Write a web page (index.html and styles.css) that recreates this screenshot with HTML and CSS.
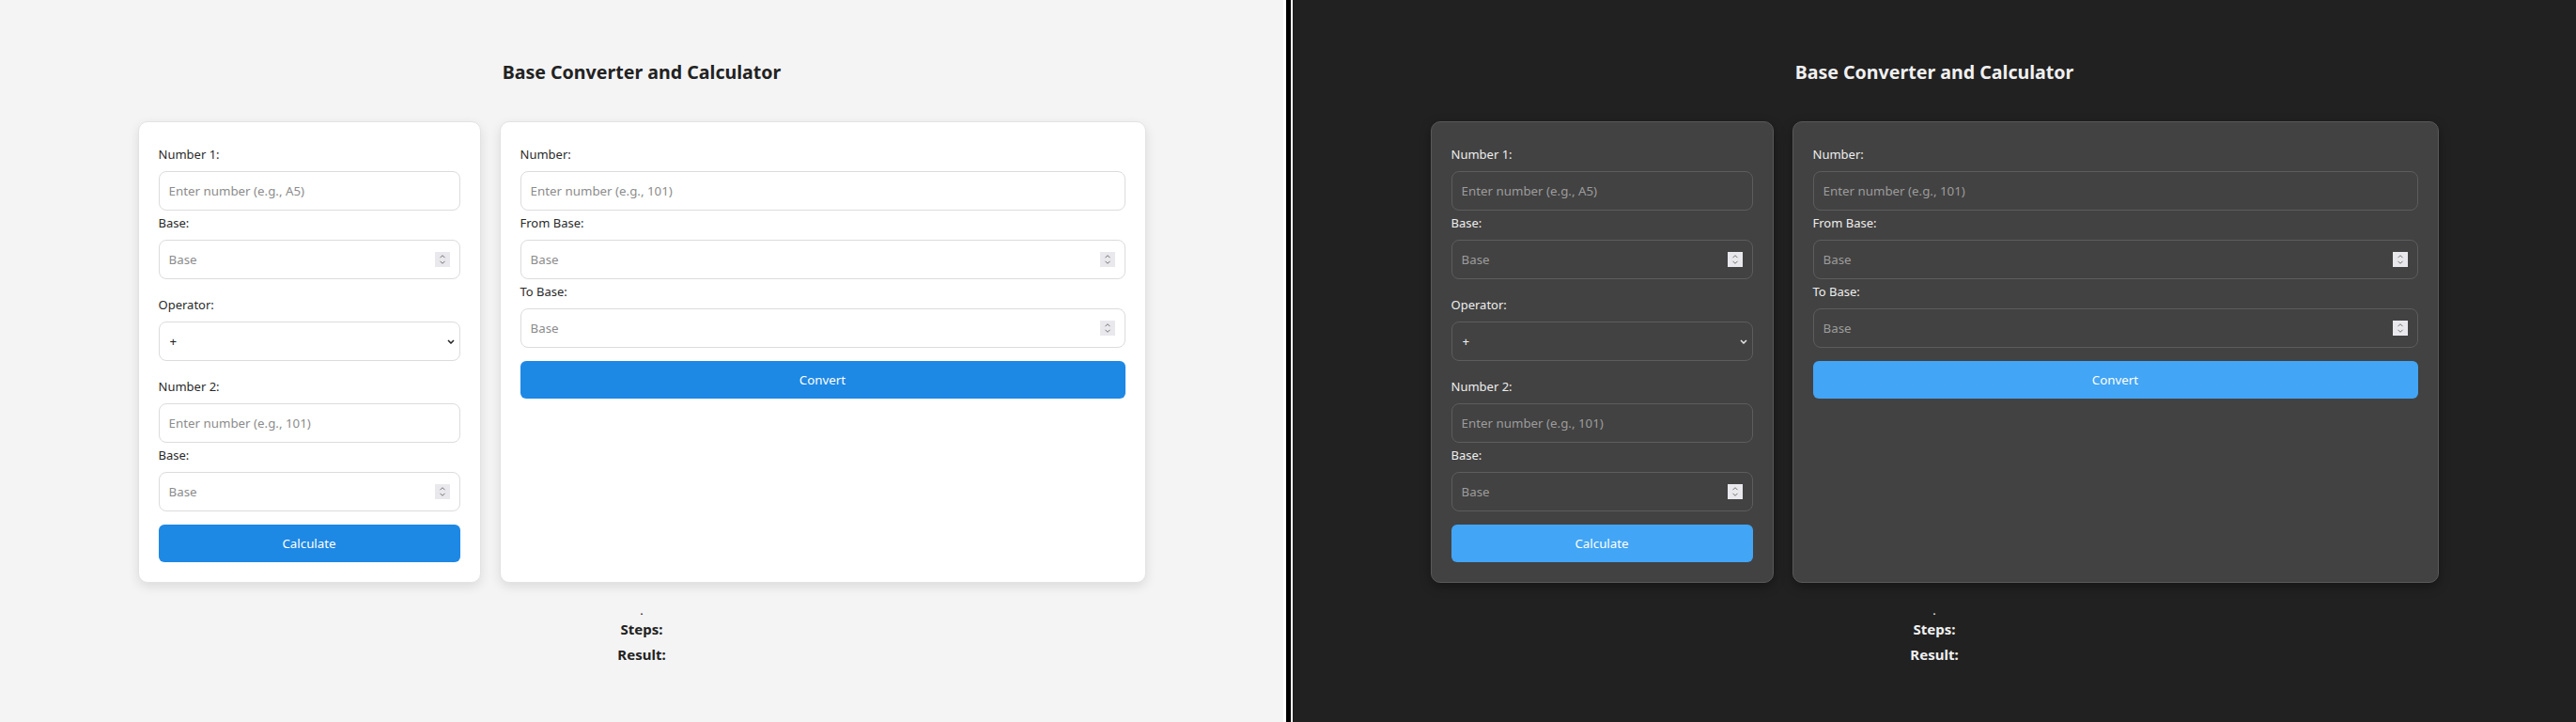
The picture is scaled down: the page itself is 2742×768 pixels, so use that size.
FILE: index.html
```html
<!DOCTYPE html>
<html lang="en">
<head>
<meta charset="utf-8">
<title>Base Converter and Calculator</title>
<link rel="stylesheet" href="styles.css">
</head>
<body>
<div class="split">
  <div class="view light">
    <h1 class="title">Base Converter and Calculator</h1>
    <div class="cards">
      <section class="card calc">
        <div class="group">
          <label>Number 1:</label>
          <div class="field"><input type="text" placeholder="Enter number (e.g., A5)"></div>
          <label>Base:</label>
          <div class="field"><input type="text" placeholder="Base"><svg class="spin" width="16" height="16" viewBox="0 0 16 16"><rect width="16" height="16"/><path d="M5.5 6.2 L8 3.7 L10.5 6.2 M5.5 9.8 L8 12.3 L10.5 9.8"/></svg></div>
        </div>
        <div class="group">
          <label>Operator:</label>
          <div class="field sel"><select><option>+</option></select><svg class="chev" width="8" height="5" viewBox="0 0 8 5"><path d="M1 1 L4 4 L7 1"/></svg></div>
        </div>
        <div class="group last">
          <label>Number 2:</label>
          <div class="field"><input type="text" placeholder="Enter number (e.g., 101)"></div>
          <label>Base:</label>
          <div class="field"><input type="text" placeholder="Base"><svg class="spin" width="16" height="16" viewBox="0 0 16 16"><rect width="16" height="16"/><path d="M5.5 6.2 L8 3.7 L10.5 6.2 M5.5 9.8 L8 12.3 L10.5 9.8"/></svg></div>
        </div>
        <button class="btn">Calculate</button>
      </section>
      <section class="card conv">
        <div class="group last">
          <label>Number:</label>
          <div class="field"><input type="text" placeholder="Enter number (e.g., 101)"></div>
          <label>From Base:</label>
          <div class="field"><input type="text" placeholder="Base"><svg class="spin" width="16" height="16" viewBox="0 0 16 16"><rect width="16" height="16"/><path d="M5.5 6.2 L8 3.7 L10.5 6.2 M5.5 9.8 L8 12.3 L10.5 9.8"/></svg></div>
          <label>To Base:</label>
          <div class="field"><input type="text" placeholder="Base"><svg class="spin" width="16" height="16" viewBox="0 0 16 16"><rect width="16" height="16"/><path d="M5.5 6.2 L8 3.7 L10.5 6.2 M5.5 9.8 L8 12.3 L10.5 9.8"/></svg></div>
        </div>
        <button class="btn">Convert</button>
      </section>
    </div>
    <div class="output">
      <div class="dot">.</div>
      <div class="line">Steps:</div>
      <div class="line">Result:</div>
    </div>
  </div>
  <div class="divider"></div>
  <div class="view dark">
    <h1 class="title">Base Converter and Calculator</h1>
    <div class="cards">
      <section class="card calc">
        <div class="group">
          <label>Number 1:</label>
          <div class="field"><input type="text" placeholder="Enter number (e.g., A5)"></div>
          <label>Base:</label>
          <div class="field"><input type="text" placeholder="Base"><svg class="spin" width="16" height="16" viewBox="0 0 16 16"><rect width="16" height="16"/><path d="M5.5 6.2 L8 3.7 L10.5 6.2 M5.5 9.8 L8 12.3 L10.5 9.8"/></svg></div>
        </div>
        <div class="group">
          <label>Operator:</label>
          <div class="field sel"><select><option>+</option></select><svg class="chev" width="8" height="5" viewBox="0 0 8 5"><path d="M1 1 L4 4 L7 1"/></svg></div>
        </div>
        <div class="group last">
          <label>Number 2:</label>
          <div class="field"><input type="text" placeholder="Enter number (e.g., 101)"></div>
          <label>Base:</label>
          <div class="field"><input type="text" placeholder="Base"><svg class="spin" width="16" height="16" viewBox="0 0 16 16"><rect width="16" height="16"/><path d="M5.5 6.2 L8 3.7 L10.5 6.2 M5.5 9.8 L8 12.3 L10.5 9.8"/></svg></div>
        </div>
        <button class="btn">Calculate</button>
      </section>
      <section class="card conv">
        <div class="group last">
          <label>Number:</label>
          <div class="field"><input type="text" placeholder="Enter number (e.g., 101)"></div>
          <label>From Base:</label>
          <div class="field"><input type="text" placeholder="Base"><svg class="spin" width="16" height="16" viewBox="0 0 16 16"><rect width="16" height="16"/><path d="M5.5 6.2 L8 3.7 L10.5 6.2 M5.5 9.8 L8 12.3 L10.5 9.8"/></svg></div>
          <label>To Base:</label>
          <div class="field"><input type="text" placeholder="Base"><svg class="spin" width="16" height="16" viewBox="0 0 16 16"><rect width="16" height="16"/><path d="M5.5 6.2 L8 3.7 L10.5 6.2 M5.5 9.8 L8 12.3 L10.5 9.8"/></svg></div>
        </div>
        <button class="btn">Convert</button>
      </section>
    </div>
    <div class="output">
      <div class="dot">.</div>
      <div class="line">Steps:</div>
      <div class="line">Result:</div>
    </div>
  </div>
</div>
</body>
</html>
```

FILE: styles.css
```css
* { box-sizing: border-box; }

body {
  margin: 0;
  font-family: "Noto Sans", "Open Sans", sans-serif;
}

.split {
  display: flex;
  width: 2742px;
  height: 768px;
}

.view {
  flex: none;
  width: 1366px;
  height: 768px;
  padding-top: 62px;
}

.light { background: #f4f4f4; color: #222; }
.dark { background: #212121; color: #f0f0f0; }

.divider {
  flex: none;
  width: 10px;
  background: linear-gradient(to right, #fff 0 3px, #000 3px 8px, #fff 8px 10px);
}

.title {
  margin: 0 0 38px;
  text-align: center;
  font-size: 19.6px;
  line-height: 29px;
  font-weight: 700;
}

.cards {
  display: flex;
  justify-content: center;
  gap: 20px;
}

.card {
  display: flex;
  flex-direction: column;
  padding: 21px;
  border-radius: 10px;
  border: 1px solid #e3e3e3;
  background: #fff;
  box-shadow: 0 4px 12px rgba(0, 0, 0, 0.1);
}

.dark .card {
  background: #424242;
  border-color: #595959;
  box-shadow: 0 4px 12px rgba(0, 0, 0, 0.35);
}

.calc { width: 365px; }
.conv { width: 688px; }

.group {
  display: flex;
  flex-direction: column;
  margin-bottom: 14px;
}
.group.last { margin-bottom: 0; }

label {
  display: block;
  font-size: 13px;
  line-height: 18px;
  margin: 4px 0 9px;
  color: #2a2a2a;
}
.dark label { color: #eeeeee; }

.field {
  display: flex;
  align-items: center;
  height: 42px;
  padding: 0 10px;
  border: 1px solid #dcdcdc;
  border-radius: 8px;
  background: #fff;
}
.dark .field {
  background: #424242;
  border-color: #5d5d5d;
}

.field input,
.field select {
  flex: 1;
  min-width: 0;
  padding: 0;
  margin: 0;
  border: 0;
  outline: 0;
  background: transparent;
  font-family: "Noto Sans", "Open Sans", sans-serif;
  font-size: 13.333px;
  color: #222;
  appearance: none;
  -webkit-appearance: none;
}
.dark .field input,
.dark .field select { color: #f0f0f0; }

.field input::placeholder { color: #8c8c8c; }
.dark .field input::placeholder { color: #9c9c9c; }

.field.sel { padding-right: 5px; }
.field select { padding-left: 1px; }

.spin { flex: none; }
.spin rect { fill: #e9e9ed; }
.spin path { fill: none; stroke: #737373; stroke-width: 1; }

.chev { flex: none; }
.chev path { fill: none; stroke: #222; stroke-width: 1.5; }
.dark .chev path { stroke: #e6e6e6; }

.btn {
  display: block;
  width: 100%;
  height: 40px;
  margin-top: 14px;
  border: 0;
  border-radius: 6px;
  background: #1e88e5;
  color: #fff;
  font-family: "Noto Sans", "Open Sans", sans-serif;
  font-size: 13.333px;
}
.dark .btn { background: #42a5f5; }

.output {
  margin-top: 20px;
  text-align: center;
}

.dot {
  font-size: 13px;
  line-height: 18px;
  height: 18px;
}

.line {
  font-size: 15px;
  line-height: 22px;
  font-weight: 700;
  margin-bottom: 5px;
}
```
